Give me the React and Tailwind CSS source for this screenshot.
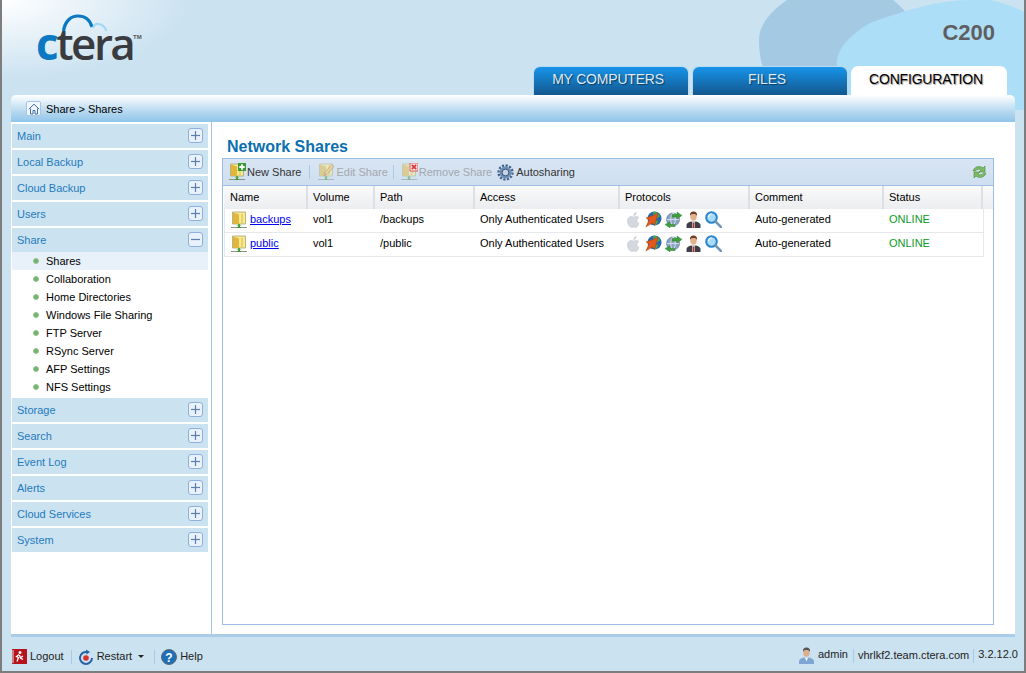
const menuTop = ["Main", "Local Backup", "Cloud Backup", "Users"];
const shareItems = ["Shares", "Collaboration", "Home Directories", "Windows File Sharing", "FTP Server", "RSync Server", "AFP Settings", "NFS Settings"];
const menuBottom = ["Storage", "Search", "Event Log", "Alerts", "Cloud Services", "System"];
const shares = [
  { name: "backups", path: "/backups" },
  { name: "public", path: "/public" },
];
const columns = [
  { label: "Name", w: "w-[84px]" },
  { label: "Volume", w: "w-[67px]" },
  { label: "Path", w: "w-[100px]" },
  { label: "Access", w: "w-[145px]" },
  { label: "Protocols", w: "w-[130px]" },
  { label: "Comment", w: "w-[134px]" },
  { label: "Status", w: "w-[99px]" },
];

function FolderShare({ dim, mark }) {
  return (
    <svg width="18" height="18" viewBox="0 0 18 18" className="shrink-0">
      <g opacity={dim ? 0.5 : 1}>
        <path d="M2.500 1h13v12h-13z" fill="#f7e98f" stroke="#a9a27a" strokeWidth=".8" />
        <path d="M3 1.500l6 2V13H3z" fill="#dfb73a" />
        <path d="M12 3v9" stroke="#e4c95f" strokeWidth="1.500" />
        <path d="M9 13v3" stroke="#3f9a35" strokeWidth="2" />
        <path d="M6.500 14.500 9 13l2.500 1.500z" fill="#5cb14e" />
        <path d="M1 16.500h16" stroke="#8d9487" />
        <path d="M7 16.500h4" stroke="#3f9a35" />
      </g>
      {mark === "plus" && (
        <g>
          <path d="M10 0h8v8h-8z" fill="#3a9a38" />
          <path d="M14 1.300v5.400M11.300 4h5.400" stroke="#fff" strokeWidth="1.800" />
        </g>
      )}
      {mark === "edit" && (
        <g opacity=".75">
          <path d="M7 12.500l.8-3 7-8 2.200 2-7 8z" fill="#eccf93" stroke="#a58a5a" strokeWidth=".6" />
          <path d="M7 12.500l.8-3 2.200 2z" fill="#d9a0a0" />
        </g>
      )}
      {mark === "remove" && (
        <g>
          <path d="M10 0h8v8h-8z" fill="#fbe9e9" stroke="#d8383a" strokeWidth=".8" />
          <path d="M11.800 1.800l4.400 4.400M16.200 1.800l-4.400 4.400" stroke="#d8383a" strokeWidth="1.800" />
        </g>
      )}
    </svg>
  );
}

function Gear() {
  return (
    <svg width="17" height="17" viewBox="0 0 17 17" className="shrink-0">
      <circle cx="8.500" cy="8.500" r="7" fill="none" stroke="#45648c" strokeWidth="2.400" strokeDasharray="2.200 1.450" />
      <circle cx="8.500" cy="8.500" r="6" fill="#6f8eb5" />
      <circle cx="8.500" cy="8.500" r="3.400" fill="#c6d4e4" stroke="#3a5678" />
    </svg>
  );
}

function Refresh() {
  return (
    <svg width="17" height="16" viewBox="0 0 17 16">
      <path d="M2 7c1-4 6-6 10-3l2-2v6H8l2-2c-2-1.500-4-1-5.500 1z" fill="#7cbb64" stroke="#4c8f3e" strokeWidth=".6" />
      <path d="M15 9c-1 4-6 6-10 3l-2 2V8h6l-2 2c2 1.500 4 1 5.500-1z" fill="#7cbb64" stroke="#4c8f3e" strokeWidth=".6" />
    </svg>
  );
}

function ProtocolIcons() {
  return (
    <div className="flex items-center gap-[3px]">
      <svg width="17" height="17" viewBox="0 0 17 17">
        <path d="M8.500 6C6.500 4.800 2.500 5.500 2.500 10c0 3.500 2.500 6.500 4 6.500.8 0 1.200-.5 2-.5s1.200.5 2 .5c1.500 0 3-2.500 3.500-4-3-1.500-2.500-5 0-6-1.500-1.500-3.500-1.200-5.500-.5z" fill="#d3d8df" stroke="#bcc3cc" strokeWidth=".5" />
        <path d="M8.500 5c0-2 1.200-3.500 3-4 0 2-1.200 3.500-3 4z" fill="#c6ccd5" />
      </svg>
      <svg width="17" height="17" viewBox="0 0 17 17">
        <circle cx="9.500" cy="7.500" r="7" fill="#2a68ad" />
        <path d="M8 .8c3-.5 6 1.500 7 5l-3.500 1.500-3-2zM9 10l4.500-.5-2 4.500-2.500-.5z" fill="#4da34a" />
        <path d="M13 2.500 1 7l3 1.800L.8 16l6.700-4 2 2.500z" fill="#e2571c" stroke="#a83a10" strokeWidth=".4" />
      </svg>
      <svg width="17" height="17" viewBox="0 0 17 17">
        <circle cx="8" cy="8.500" r="6.500" fill="#8aa5c2" stroke="#4f6f92" strokeWidth=".6" />
        <path d="M2 8.500h12M8 2c-3 3-3 10 0 13M8 2c3 3 3 10 0 13" stroke="#e3ebf3" strokeWidth=".8" fill="none" />
        <path d="M7 3.500h5V1l5 3.500L12 8V6H7z" fill="#3f9f3a" stroke="#2a7a2a" strokeWidth=".4" />
        <path d="M10 13.500H5V11L0 13.500 5 17v-1.500h5z" fill="#3f9f3a" stroke="#2a7a2a" strokeWidth=".4" />
      </svg>
      <svg width="17" height="17" viewBox="0 0 17 17">
        <path d="M1.500 17v-3c0-2 2.500-3 4.500-3.500h5c2 .5 4.500 1.500 4.500 3.500v3z" fill="#3c3f45" />
        <path d="M6.500 10.500h4l-1 1 .5 5.500H7l.5-5.500z" fill="#fff" />
        <path d="M8 11.500h1l.6 5.500H7.400z" fill="#b3262b" />
        <ellipse cx="8.500" cy="5.500" rx="3.200" ry="4.200" fill="#e3b08e" />
        <path d="M5 5c-.5-3 1-4.500 3.500-4.500S12.500 2 12 5c-.5-1.500-1.500-2-3.500-2S5.500 3.500 5 5z" fill="#6b3f22" />
      </svg>
      <svg width="17" height="17" viewBox="0 0 17 17">
        <circle cx="6.500" cy="6.500" r="5.300" fill="#a9dcf7" stroke="#2a84d0" strokeWidth="2" />
        <path d="M3.500 6a3 3 0 0 1 3-3" stroke="#fff" strokeWidth="1.200" fill="none" />
        <path d="M10.800 10.800l5 5" stroke="#6e95ba" strokeWidth="2.600" strokeLinecap="round" />
      </svg>
    </div>
  );
}

function MenuHead({ label, open }) {
  return (
    <div className="mb-[2px] flex h-[24px] items-center justify-between bg-[#cbe2f1] px-[5px] text-[#1f7bbd]">
      <span>{label}</span>
      <span className="-mt-[1px] flex h-[15px] w-[15px] items-center justify-center rounded-[3px] border border-[#8fb0df] bg-[#e9f1fb]">
        <svg width="9" height="9" viewBox="0 0 9 9">
          <path d="M0 4.500h9" stroke="#5b7fa8" strokeWidth="1.200" />
          {!open && <path d="M4.500 0v9" stroke="#5b7fa8" strokeWidth="1.200" />}
        </svg>
      </span>
    </div>
  );
}

function Sep() {
  return <span className="h-[14px] w-px bg-[#a9c8ea]" />;
}

export default function App() {
  return (
    <div className="relative flex h-[673px] w-[1026px] flex-col overflow-hidden border-x-2 border-b-2 border-x-[#7d7d7d] border-b-[#7d7d7d] bg-[#cbe2f1] font-['Liberation_Sans',Arial,sans-serif] text-[11px] text-black">
      <div className="absolute left-0 top-0 h-[80px] w-[190px] bg-[radial-gradient(ellipse_at_top_left,#ffffff_0%,#ffffff00_70%)]" />
      <svg className="absolute left-[518px] top-0" width="506" height="130" viewBox="0 0 506 130">
        <path d="M267 0C250 12 239 25 239 40 239 55 242 66 243 66H330L395 33C395 20 385 10 373 0z" fill="#a3c9e3" />
        <path d="M317 66C315 50 330 35 350 23 385 10 420 0 450 0h20c15 3 28 8 36 13v97H317z" fill="#addef7" />
      </svg>

      <header className="relative flex h-[95px] shrink-0 justify-between">
        <div className="relative ml-[34px] mt-[14px] h-[46px] w-[110px]">
          <svg className="absolute left-[26px] top-0" width="50" height="22" viewBox="0 0 50 22">
            <path d="M1.500 17C3 7 9 2 16 2c7 0 12 4 14 11" fill="none" stroke="#0a79c2" strokeWidth="3.200" />
            <path d="M31 14c1-3 3.500-4.500 6-4 3.500.5 6 3 7.500 7" fill="none" stroke="#9fd7f5" strokeWidth="2" />
          </svg>
          <div className="absolute bottom-[-6px] left-0 flex items-baseline font-['Open_Sans',sans-serif] text-[44px] font-semibold leading-[46px] tracking-[-2.500px] text-[#3a3b3f]">
            <span className="font-bold text-[#0a79c2]">c</span>
            <span>tera</span>
          </div>
          <span className="absolute left-[97px] top-[20px] text-[6px] font-bold leading-none text-[#55565a]">TM</span>
        </div>
        <div className="flex flex-col items-end justify-between">
          <div className="mr-[29px] mt-[20px] text-[22px] font-bold leading-[26px] text-[#5f5f62]">C200</div>
          <nav className="mr-[17px] flex gap-[3px] text-[14px] tracking-[-0.2px]">
            <div className="flex h-[29px] w-[156px] items-center justify-center rounded-t-[7px] border-x border-t border-[#b9d9ee] bg-gradient-to-b from-[#1794ea] to-[#12588f] pb-[3px] pr-[6px] text-[#dfeaf3] [text-shadow:1px_1px_1px_#0a3a60]">
              MY COMPUTERS
            </div>
            <div className="flex h-[29px] w-[156px] items-center justify-center rounded-t-[7px] border-x border-t border-[#b9d9ee] bg-gradient-to-b from-[#1794ea] to-[#12588f] pb-[3px] pr-[6px] text-[#dfeaf3] [text-shadow:1px_1px_1px_#0a3a60]">
              FILES
            </div>
            <div className="flex h-[29px] w-[156px] items-center justify-center rounded-t-[7px] bg-white pb-[3px] pr-[6px] text-black [text-shadow:1px_1px_1px_#9a9a9a]">
              CONFIGURATION
            </div>
          </nav>
        </div>
      </header>

      <div className="relative mx-[9px] flex min-h-0 flex-1 flex-col">
        <div className="flex h-[27px] shrink-0 items-center gap-[5px] rounded-t-[5px] bg-gradient-to-b from-[#ffffff] via-[#b8d9f0] via-60% to-[#90c5e9] pl-[15px]">
          <span className="flex h-[15px] w-[15px] items-center justify-center rounded-[2px] border border-[#a8c4e6] bg-[#f2f7fd]">
            <svg width="12" height="12" viewBox="0 0 12 12" fill="none" stroke="#3f6fa5">
              <path d="M.8 6.200 6 1.200l5.200 5M2.500 5.500V11h2.500V7.500h2V11h2.500V5.500" />
            </svg>
          </span>
          <span className="pt-[2px]">Share &gt; Shares</span>
        </div>

        <div className="flex min-h-0 flex-1 border-b-[3px] border-[#a9cde6] bg-white">
          <aside className="w-[201px] shrink-0 border-r border-[#a5c5e6] pl-px pr-[3px] pt-[2px]">
            {menuTop.map((m) => (
              <MenuHead key={m} label={m} />
            ))}
            <MenuHead label="Share" open />
            <ul className="-mt-[2px] mb-[2px]">
              {shareItems.map((s, i) => (
                <li key={s} className={"flex h-[18px] items-center pl-[21px] " + (i === 0 ? "bg-[#e8f0fa]" : "")}>
                  <span className="mr-[7px] h-[6px] w-[6px] rounded-full border border-[#93c48f] bg-[#72b46c]" />
                  {s}
                </li>
              ))}
            </ul>
            {menuBottom.map((m) => (
              <MenuHead key={m} label={m} />
            ))}
          </aside>

          <main className="flex min-w-0 flex-1 flex-col pb-[9px] pl-[10px] pr-[21px] pt-[15px]">
            <h1 className="ml-[5px] h-[21px] text-[16px] font-bold leading-[20px] text-[#0b6fb0]">Network Shares</h1>
            <div className="min-h-0 flex-1 border border-[#9dbde6]">
              <div className="flex h-[27px] items-center gap-[6px] border-b border-[#9dbde6] bg-gradient-to-b from-[#d8e5f3] to-[#cfdff0] px-[5px] text-[#333]">
                <div className="mr-[2px] flex items-center gap-[1px]">
                  <FolderShare mark="plus" />
                  <span>New Share</span>
                </div>
                <Sep />
                <div className="-mr-px ml-px flex items-center gap-[1px] text-[#a4a8ad]">
                  <FolderShare dim mark="edit" />
                  <span>Edit Share</span>
                </div>
                <Sep />
                <div className="flex items-center gap-[1px] text-[#a4a8ad]">
                  <FolderShare dim mark="remove" />
                  <span>Remove Share</span>
                </div>
                <div className="-ml-px flex items-center gap-[2px]">
                  <Gear />
                  <span>Autosharing</span>
                </div>
                <div className="ml-auto flex">
                  <Refresh />
                </div>
              </div>
              <div className="ml-px flex h-[23px] bg-gradient-to-b from-[#fafafa] to-[#ebedf0]">
                {columns.map((c, i) => (
                  <div key={c.label} className={c.w + " flex items-center border-r-2 border-[#dcdfe3] " + (i === 0 ? "pl-[6px]" : "pl-[5px]")}>
                    {c.label}
                  </div>
                ))}
              </div>
              {shares.map((s) => (
                <div key={s.name} className="ml-px flex h-[24px] w-[760px] items-center border-x border-b border-[#e6e8ea] bg-white pb-[2px]">
                  <div className="flex w-[83px] items-center gap-[2px] pl-[5px]">
                    <FolderShare />
                    <a href="#" className="text-[#0000ee] underline">{s.name}</a>
                  </div>
                  <div className="w-[67px] pl-[5px]">vol1</div>
                  <div className="w-[100px] pl-[5px]">{s.path}</div>
                  <div className="w-[145px] pl-[5px]">Only Authenticated Users</div>
                  <div className="w-[130px] pl-[5px]">
                    <ProtocolIcons />
                  </div>
                  <div className="w-[134px] pl-[5px]">Auto-generated</div>
                  <div className="pl-[5px] text-[#0d9a24]">ONLINE</div>
                </div>
              ))}
            </div>
          </main>
        </div>
      </div>

      <footer className="flex h-[34px] shrink-0 items-center justify-between pl-[10px] pr-[6px] text-[#222]">
        <div className="flex items-center gap-[7px] pt-[5px]">
          <div className="flex items-center gap-[3px]">
            <svg width="15" height="15" viewBox="0 0 15 15">
              <rect width="15" height="15" fill="#b5141c" />
              <circle cx="8" cy="3.500" r="1.500" fill="#fff" />
              <path d="M7 5.500l-2.500 2 2 1-1.500 4M7.500 6l1 3 2.500 1.500M8 9l3-2" stroke="#fff" strokeWidth="1.300" fill="none" />
              <path d="M1 1v13" stroke="#e8e8e8" />
            </svg>
            <span>Logout</span>
          </div>
          <Sep />
          <div className="mr-[3px] flex items-center gap-[4px]">
            <svg width="14" height="16" viewBox="0 0 14 16">
              <path d="M8 3A6 6 0 1 0 13 9" fill="none" stroke="#2a62a8" strokeWidth="2" />
              <path d="M7 .5l4 2.500L7.500 5.500z" fill="#2a62a8" />
              <circle cx="7" cy="9" r="2.800" fill="#dc2f2f" />
            </svg>
            <span>Restart</span>
            <span className="ml-[2px] h-0 w-0 border-x-[3px] border-t-[3px] border-x-transparent border-t-[#222]" />
          </div>
          <Sep />
          <div className="-ml-px flex items-center gap-[3px]">
            <svg width="16" height="16" viewBox="0 0 16 16">
              <circle cx="8" cy="8" r="7.500" fill="#1e6fb5" stroke="#5a6b78" />
              <text x="8" y="12.500" textAnchor="middle" fontSize="12" fontWeight="700" fill="#fff" fontFamily="Liberation Sans">?</text>
            </svg>
            <span>Help</span>
          </div>
        </div>
        <div className="flex items-center gap-[4px] pt-[3px]">
          <svg width="17" height="17" viewBox="0 0 17 17">
            <path d="M1 17v-2.500C1 12 4 11 6.500 10.500h4C13 11 16 12 16 14.500V17z" fill="#7ea6d4" />
            <path d="M7 10.500h3l-1.500 4z" fill="#fff" />
            <ellipse cx="8.500" cy="5.500" rx="3.200" ry="4.200" fill="#dcae8d" />
            <path d="M5 5c-.5-3 1-4.500 3.500-4.500S12.500 2 12 5c-.5-1.500-1.500-2-3.500-2S5.500 3.500 5 5z" fill="#555" />
          </svg>
          <span className="-ml-[1px] mr-[1px] -mt-[2px]">admin</span>
          <Sep />
          <span>vhrlkf2.team.ctera.com</span>
          <Sep />
          <span className="-mt-[2px]">3.2.12.0</span>
        </div>
      </footer>
    </div>
  );
}
